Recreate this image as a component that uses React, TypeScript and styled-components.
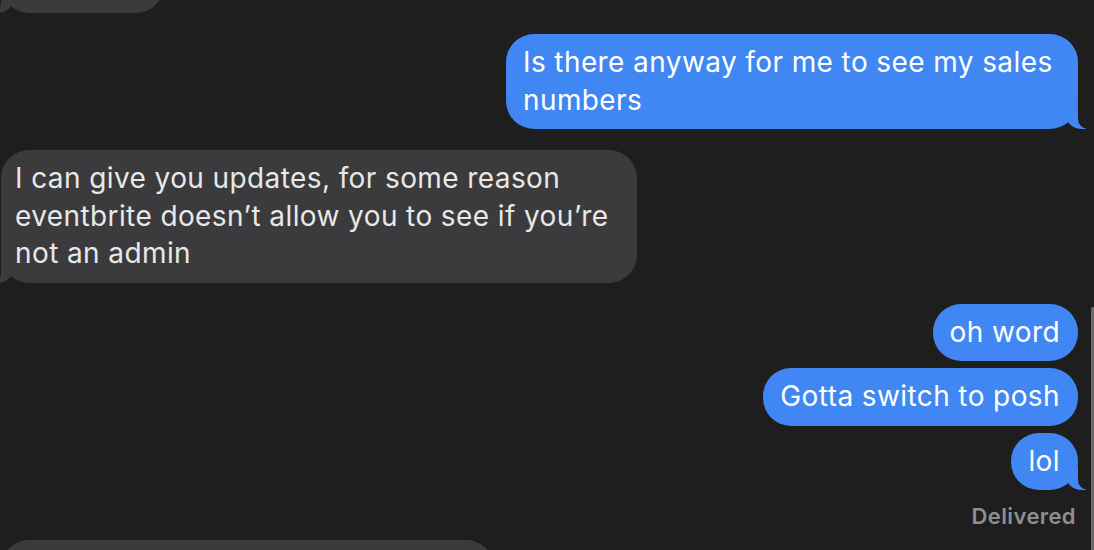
import styled, { createGlobalStyle, css } from "styled-components";

const GlobalStyle = createGlobalStyle`
  html, body {
    margin: 0;
    padding: 0;
    background: #1e1e1e;
    overflow: hidden;
  }
`;

const BG = "#1e1e1e";
const BLUE = "#4087f4";
const GRAY = "#3b3b3d";

const Screen = styled.div`
  position: relative;
  width: 1094px;
  height: 550px;
  overflow: hidden;
  background: ${BG};
  font-family: Inter, "Liberation Sans", sans-serif;
`;

const Thread = styled.div`
  display: flex;
  flex-direction: column;
  padding: 0 16px 0 1px;
`;

const Row = styled.div<{ $mine?: boolean; $gap: number }>`
  display: flex;
  justify-content: ${(p) => (p.$mine ? "flex-end" : "flex-start")};
  margin-top: ${(p) => p.$gap}px;
`;

// the little curl at the bottom corner of the last bubble in a group
const tail = (mine: boolean) => css`
  &::before,
  &::after {
    content: "";
    position: absolute;
    bottom: 0;
    height: 24px;
  }
  &::before {
    width: 20px;
    background: ${mine ? BLUE : GRAY};
    ${mine
      ? "right: -8px; border-bottom-left-radius: 16px 14px;"
      : "left: -8px; border-bottom-right-radius: 16px 14px;"}
  }
  &::after {
    width: 26px;
    background: ${BG};
    ${mine
      ? "right: -26px; border-bottom-left-radius: 10px;"
      : "left: -26px; border-bottom-right-radius: 10px;"}
  }
`;

const Bubble = styled.div<{ $mine?: boolean; $tail?: boolean; $width?: number }>`
  position: relative;
  box-sizing: border-box;
  max-width: 636px;
  ${(p) => p.$width && `width: ${p.$width}px;`}
  padding: 10px 17px 10px 14px;
  border-radius: 28px;
  font-size: 28px;
  line-height: 37.5px;
  letter-spacing: 0.4px;
  background: ${(p) => (p.$mine ? BLUE : GRAY)};
  color: ${(p) => (p.$mine ? "#ffffff" : "#e8e8e8")};
  ${(p) => p.$mine && "padding: 10px 18px 10px 17px;"}
  ${(p) => p.$tail && tail(!!p.$mine)}
`;

const Cut = styled(Bubble)`
  min-height: 57px;
`;

const Status = styled.div`
  align-self: flex-end;
  margin: 13px 2px 0 0;
  font-size: 22px;
  line-height: 26px;
  font-weight: 600;
  letter-spacing: 0.4px;
  color: #8e8e90;
`;

const Scrollbar = styled.div`
  position: absolute;
  right: 0;
  top: 307px;
  width: 3px;
  height: 260px;
  background: #6b6b6d;
  border-radius: 2px 0 0 2px;
`;

const App = () => {
  return (
    <Screen>
      <GlobalStyle />
      <Thread>
        <Row $gap={-44}>
          <Cut $tail $width={163} />
        </Row>
        <Row $mine $gap={21}>
          <Bubble $mine $tail $width={572}>
            Is there anyway for me to see my sales numbers
          </Bubble>
        </Row>
        <Row $gap={21}>
          <Bubble $tail>
            I can give you updates, for some reason eventbrite doesn’t allow
            you to see if you’re not an admin
          </Bubble>
        </Row>
        <Row $mine $gap={21}>
          <Bubble $mine>oh word</Bubble>
        </Row>
        <Row $mine $gap={7}>
          <Bubble $mine>Gotta switch to posh</Bubble>
        </Row>
        <Row $mine $gap={7}>
          <Bubble $mine $tail>lol</Bubble>
        </Row>
        <Status>Delivered</Status>
        <Row $gap={11}>
          <Bubble $width={493}>&nbsp;</Bubble>
        </Row>
      </Thread>
      <Scrollbar />
    </Screen>
  );
};

export default App;
